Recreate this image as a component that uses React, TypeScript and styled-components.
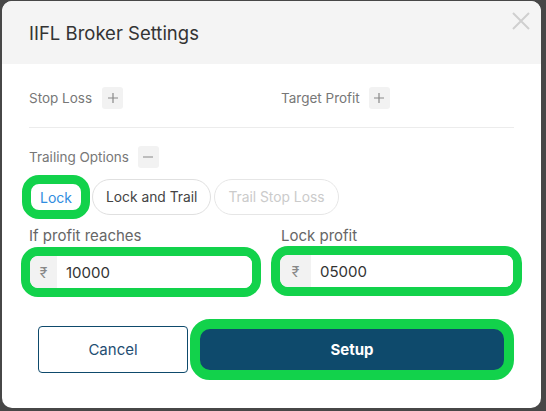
import React from "react";
import styled, { createGlobalStyle } from "styled-components";

const GlobalStyle = createGlobalStyle`
  html, body { margin: 0; padding: 0; background: #474747; }
  body { font-family: Inter, "Noto Sans", Arial, sans-serif; }
  * { box-sizing: border-box; }
`;

const GREEN = "#12d24b";
const NAVY = "#0e4a6c";

const Backdrop = styled.div`
  width: 546px;
  height: 411px;
  padding: 1px 5px 3px 2px;
  background: #474747;
`;

const Modal = styled.div`
  height: 407px;
  background: #ffffff;
  border-radius: 10px;
  overflow: hidden;
  display: flex;
  flex-direction: column;
`;

const Header = styled.div`
  position: relative;
  height: 63px;
  flex: none;
  background: #f4f4f4;
  padding: 0 27px;
  display: flex;
  align-items: center;
`;

const Title = styled.h2`
  margin: 0;
  font-size: 18.5px;
  font-weight: 400;
  color: #333;
`;

const Close = styled.button`
  position: absolute;
  top: 10px;
  right: 10px;
  width: 20px;
  height: 20px;
  padding: 0;
  border: none;
  background: none;
  display: flex;
  align-items: center;
  justify-content: center;
`;

const Body = styled.div`
  padding: 23px 27px 0 27px;
  display: flex;
  flex-direction: column;
`;

const TwoCols = styled.div`
  display: grid;
  grid-template-columns: 242px minmax(0, 1fr);
  column-gap: 10px;
`;

const ToggleRow = styled.div<{ $gap?: number }>`
  display: flex;
  align-items: center;
  gap: ${(p) => p.$gap ?? 10}px;
`;

const ToggleLabel = styled.span`
  font-size: 13.5px;
  color: #777;
`;

const IconBox = styled.span`
  width: 21px;
  height: 22px;
  border-radius: 3px;
  background: #f2f2f2;
  display: flex;
  align-items: center;
  justify-content: center;
`;

const Divider = styled.hr`
  margin: 18px 0 0 0;
  border: none;
  border-top: 1px solid #ececec;
`;

const Section = styled.div`
  margin-top: 18px;
`;

const Pills = styled.div`
  display: flex;
  align-items: center;
  gap: 3px;
  margin: 7px 0 0 -7px;
`;

const ActivePill = styled.button`
  height: 44px;
  padding: 0 9px;
  border: 9px solid ${GREEN};
  border-radius: 17px;
  background: #fff;
  font-family: inherit;
  font-size: 14px;
  color: #2f8de0;
  margin-right: -1px;
`;

const Pill = styled.button<{ $disabled?: boolean }>`
  height: 36px;
  padding: 0 13px;
  border: 1px solid ${(p) => (p.$disabled ? "#e6e6e6" : "#e0e0e0")};
  border-radius: 18px;
  background: #fff;
  font-family: inherit;
  font-size: 13.8px;
  color: ${(p) => (p.$disabled ? "#cbcbcb" : "#444")};
`;

const Fields = styled(TwoCols)`
  margin-top: 8px;
`;

const Field = styled.div`
  min-width: 0;
  display: flex;
  flex-direction: column;
  gap: 2px;
`;

const FieldLabel = styled.label`
  font-size: 15px;
  line-height: 18px;
  color: #666;
`;

const InputBox = styled.div<{ $side: "left" | "right" }>`
  flex: none;
  height: 50px;
  border: 9px solid ${GREEN};
  border-radius: 17px;
  display: flex;
  align-items: stretch;
  overflow: hidden;
  margin-left: ${(p) => (p.$side === "left" ? -8 : -10)}px;
  margin-right: ${(p) => (p.$side === "left" ? 10 : -8)}px;
  margin-top: ${(p) => (p.$side === "left" ? 0 : -1)}px;
`;

const Prefix = styled.span<{ $w: number }>`
  width: ${(p) => p.$w}px;
  flex: none;
  background: #f2f2f2;
  color: #888;
  font-size: 14px;
  display: flex;
  align-items: center;
  justify-content: center;
  border-radius: 8px 0 0 8px;
`;

const Value = styled.input`
  flex: 1;
  width: 0;
  min-width: 0;
  border: none;
  outline: none;
  background: #fff;
  padding: 0 0 0 9px;
  font-family: inherit;
  font-size: 15px;
  color: #333;
`;

const Footer = styled.div`
  display: flex;
  align-items: center;
  gap: 2px;
  margin-top: 22px;
  padding-left: 9px;
`;

const CancelButton = styled.button`
  width: 150px;
  height: 47px;
  border: 1px solid ${NAVY};
  border-radius: 4px;
  background: #fff;
  font-family: inherit;
  font-size: 15px;
  color: #1f4e72;
`;

const SetupButton = styled.button`
  flex: 1;
  height: 61px;
  border: 10px solid ${GREEN};
  border-radius: 20px;
  background: ${NAVY};
  font-family: inherit;
  font-size: 15px;
  font-weight: 700;
  color: #fff;
`;

const Plus = () => (
  <svg width="12" height="12" viewBox="0 0 12 12">
    <path d="M6 1v10M1 6h10" stroke="#888" strokeWidth="1.2" />
  </svg>
);

const Minus = () => (
  <svg width="12" height="12" viewBox="0 0 12 12">
    <path d="M1 6h10" stroke="#888" strokeWidth="1.2" />
  </svg>
);

export default function App() {
  return (
    <>
      <GlobalStyle />
      <Backdrop>
        <Modal>
          <Header>
            <Title>IIFL Broker Settings</Title>
            <Close aria-label="Close">
              <svg width="20" height="20" viewBox="0 0 20 20">
                <path d="M2 2l16 16M18 2L2 18" stroke="#cfcfcf" strokeWidth="2" />
              </svg>
            </Close>
          </Header>
          <Body>
            <TwoCols>
              <ToggleRow>
                <ToggleLabel>Stop Loss</ToggleLabel>
                <IconBox><Plus /></IconBox>
              </ToggleRow>
              <ToggleRow $gap={9}>
                <ToggleLabel>Target Profit</ToggleLabel>
                <IconBox><Plus /></IconBox>
              </ToggleRow>
            </TwoCols>
            <Divider />
            <Section>
              <ToggleRow $gap={9}>
                <ToggleLabel>Trailing Options</ToggleLabel>
                <IconBox><Minus /></IconBox>
              </ToggleRow>
            </Section>
            <Pills>
              <ActivePill>Lock</ActivePill>
              <Pill>Lock and Trail</Pill>
              <Pill $disabled>Trail Stop Loss</Pill>
            </Pills>
            <Fields>
              <Field>
                <FieldLabel>If profit reaches</FieldLabel>
                <InputBox $side="left">
                  <Prefix $w={27}>₹</Prefix>
                  <Value defaultValue="10000" />
                </InputBox>
              </Field>
              <Field>
                <FieldLabel>Lock profit</FieldLabel>
                <InputBox $side="right">
                  <Prefix $w={31}>₹</Prefix>
                  <Value defaultValue="05000" />
                </InputBox>
              </Field>
            </Fields>
            <Footer>
              <CancelButton>Cancel</CancelButton>
              <SetupButton>Setup</SetupButton>
            </Footer>
          </Body>
        </Modal>
      </Backdrop>
    </>
  );
}
